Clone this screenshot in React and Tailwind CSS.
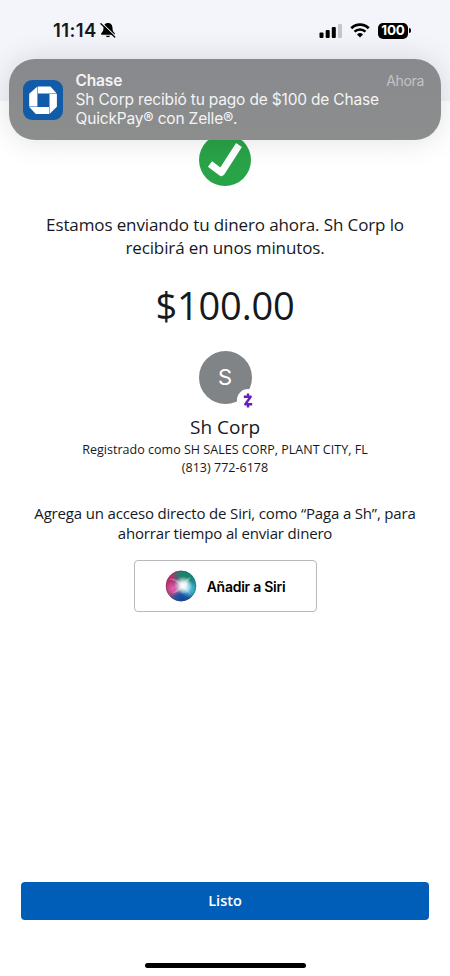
import React from "react";

// --- Status bar icons ---
function BellOff() {
  return (
    <svg width="18" height="17" viewBox="0 0 18 17" className="ml-[2px]">
      <path d="M9 1C5.900 1 4.600 3.200 4.500 6c-.1 3-.9 4-2.200 5.300-.6.6-.2 1.500.6 1.500h12.200c.8 0 1.200-.9.6-1.500C14.400 10 13.600 9 13.500 6 13.400 3.200 12.100 1 9 1Z" fill="#000" />
      <path d="M6.700 13.800a2.400 2 0 0 0 4.600 0Z" fill="#000" />
      <path d="M2.900 1.100 16.700 14.300" stroke="#f4f5fa" strokeWidth="1.100" />
      <path d="M1.900 1.800 15.700 15" stroke="#000" strokeWidth="1.300" strokeLinecap="round" />
    </svg>
  );
}

function Signal() {
  return (
    <svg width="24" height="16" viewBox="0 0 24 16">
      <rect x="0.500" y="9.500" width="4" height="5.500" rx="1" />
      <rect x="6.700" y="7" width="4" height="8" rx="1" />
      <rect x="12.800" y="4" width="4" height="11" rx="1" />
      <rect x="19" y="1" width="4" height="14" rx="1" fill="#c5c6cb" />
    </svg>
  );
}

function Wifi() {
  return (
    <svg width="20" height="15" viewBox="0 0 20 15" fill="none" stroke="#000">
      <path d="M1.300 5.200a12.500 12.500 0 0 1 17.400 0" strokeWidth="2.700" />
      <path d="M4.500 8.600a8 8 0 0 1 11 0" strokeWidth="2.500" />
      <path d="M10 14.600 7 11.500a4.400 4.400 0 0 1 6 0Z" fill="#000" stroke="none" />
    </svg>
  );
}

function StatusBar() {
  return (
    <header className="flex h-[101px] items-start justify-between bg-[#f4f5fa] pt-[22px] pr-[39px] pl-[53px]">
      <div className="flex h-[17px] items-center">
        <span className="font-[Inter,sans-serif] text-[18.500px] leading-none font-semibold tracking-[0.400px]">11:14</span>
        <BellOff />
      </div>
      <div className="flex h-[17px] items-center">
        <Signal />
        <div className="ml-[7px]"><Wifi /></div>
        <div className="ml-[8px] flex h-4 w-[30px] items-center justify-center rounded-[5px] bg-black font-[Inter,sans-serif] text-[13.500px] leading-none font-bold tracking-[-0.200px] text-white">
          100
        </div>
        <div className="ml-px h-[5px] w-[2px] rounded-r-full bg-black"></div>
      </div>
    </header>
  );
}

// --- Push notification over the page ---
function Notification() {
  return (
    <div className="absolute top-[59px] left-[9px] z-10 flex h-[81px] w-[432px] items-center rounded-[26px] bg-linear-to-b from-[#88898d] to-[#8c8e8d] pl-[14px] font-[Inter,sans-serif] text-white shadow-[0_0_30px_rgba(0,0,0,0.13)]">
      <svg width="40" height="40" viewBox="0 0 40 40" className="shrink-0">
        <rect width="40" height="40" rx="9" fill="#115ba9" />
        <g fill="#fff">
          <path d="M14.900 6.500H27.500L33.700 13.400H14.900Z" />
          <path d="M33.900 13.900V26.700L26.500 33.900V13.900Z" />
          <path d="M26 34H12.800L6.300 27.100H26Z" />
          <path d="M6.200 26.600V13.700L14.400 6.600V26.600Z" />
        </g>
      </svg>
      <div className="ml-[12.500px] flex-1 text-[15.500px] leading-[19px] text-[#f4f4f5]">
        <div className="flex justify-between pr-[17px]">
          <span className="font-semibold tracking-[-0.150px]">Chase</span>
          <span className="text-[14px] tracking-[-0.350px] text-[#c3c4c6]">Ahora</span>
        </div>
        <p className="tracking-[-0.180px] whitespace-nowrap">Sh Corp recibió tu pago de $100 de Chase</p>
        <p className="tracking-[-0.180px] whitespace-nowrap">QuickPay® con Zelle®.</p>
      </div>
    </div>
  );
}

function SiriOrb() {
  return (
    <svg width="32" height="32" viewBox="0 0 32 32">
      <defs>
        <linearGradient id="rim" x1="0" y1="0.300" x2="1" y2="0.700">
          <stop offset="0" stopColor="#cc2560" />
          <stop offset="0.350" stopColor="#8f4680" />
          <stop offset="0.650" stopColor="#2c7f94" />
          <stop offset="1" stopColor="#14a3ad" />
        </linearGradient>
        <radialGradient id="green" cx="0.650" cy="0.080" r="0.450">
          <stop offset="0" stopColor="#12886a" />
          <stop offset="0.500" stopColor="#12886a" stopOpacity="0.800" />
          <stop offset="1" stopColor="#12886a" stopOpacity="0" />
        </radialGradient>
        <radialGradient id="blue" cx="0.550" cy="1" r="0.450">
          <stop offset="0" stopColor="#153f92" />
          <stop offset="0.500" stopColor="#1c4fa5" stopOpacity="0.900" />
          <stop offset="1" stopColor="#1c4fa5" stopOpacity="0" />
        </radialGradient>
        <radialGradient id="pink" cx="0.240" cy="0.580" r="0.260">
          <stop offset="0" stopColor="#ee5fae" />
          <stop offset="1" stopColor="#ee5fae" stopOpacity="0" />
        </radialGradient>
        <radialGradient id="cyan" cx="0.740" cy="0.600" r="0.280">
          <stop offset="0" stopColor="#5fcbee" />
          <stop offset="1" stopColor="#5fcbee" stopOpacity="0" />
        </radialGradient>
        <radialGradient id="core" cx="0.570" cy="0.480" r="0.300">
          <stop offset="0" stopColor="#fff" />
          <stop offset="0.350" stopColor="#fff" stopOpacity="0.850" />
          <stop offset="1" stopColor="#fff" stopOpacity="0" />
        </radialGradient>
      </defs>
      <circle cx="16" cy="16" r="15.200" fill="url(#rim)" />
      <circle cx="16" cy="16" r="15.200" fill="url(#green)" />
      <circle cx="16" cy="16" r="15.200" fill="url(#blue)" />
      <circle cx="16" cy="16" r="15.200" fill="url(#pink)" />
      <circle cx="16" cy="16" r="15.200" fill="url(#cyan)" />
      <path d="M4 9C10 8 14 11 18 15 20 10 22 8 26 7 23 11 22 14 20 17L27 26 18 18C14 21 11 23 7 23 11 20 14 18 16 16 12 12 9 10 4 9Z" fill="#fff" opacity="0.300" />
      <circle cx="16" cy="16" r="15.200" fill="url(#core)" />
      <circle cx="16" cy="16" r="14.800" fill="none" stroke="#38455c" strokeOpacity="0.300" />
    </svg>
  );
}

export default function App() {
  return (
    <div className="relative flex h-[976px] w-[450px] flex-col overflow-hidden bg-white font-['Open_Sans',sans-serif] text-[#15191e]">
      <StatusBar />
      <Notification />

      <main className="flex flex-1 flex-col items-center pt-[33px] text-center whitespace-nowrap">
        <svg width="52" height="52" viewBox="0 0 52 52">
          <circle cx="26" cy="26" r="26" fill="#29a348" />
          <path d="M11 30 22.300 38.500 40 11" fill="none" stroke="#fff" strokeWidth="7" strokeLinejoin="round" />
        </svg>

        <p className="mt-[27px] text-[17px] leading-[23px] tracking-[-0.120px]">
          Estamos enviando tu dinero ahora. Sh Corp lo
          <br />
          recibirá en unos minutos.
        </p>
        <h1 className="mt-[20px] text-[38px] leading-[52px] tracking-[-0.200px]">$100.00</h1>

        <div className="relative mt-[20px] flex size-[53px] items-center justify-center rounded-full bg-[#808487] font-[Inter,sans-serif] text-[22px] text-white">
          S
          <div className="absolute top-[38px] left-[38px] flex size-[22px] items-center justify-center rounded-full bg-white">
            <svg width="10" height="15" viewBox="0 0 10 15" fill="none" stroke="#6420bd" strokeWidth="2.400">
              <path d="M5 0.500V3.500M5 11.500V14.500" />
              <path d="M0.800 3.700H7.700L2.300 11.300H9.200" strokeLinejoin="round" />
            </svg>
          </div>
        </div>

        <h2 className="mt-[10px] text-[19px] leading-[26px] tracking-[0.050px]">Sh Corp</h2>
        <p className="mt-px text-[12.500px] leading-[18px] tracking-[0.020px]">
          Registrado como SH SALES CORP, PLANT CITY, FL
          <br />
          (813) 772-6178
        </p>

        <p className="mt-[26px] text-[15px] leading-[20px] tracking-[-0.170px]">
          Agrega un acceso directo de Siri, como “Paga a Sh”, para
          <br />
          ahorrar tiempo al enviar dinero
        </p>

        <button className="mt-[17px] flex h-[52px] w-[183px] items-center justify-center gap-[10px] rounded-[4px] border border-[#b9b9bb] bg-white font-[Inter,sans-serif] text-[14px] font-semibold tracking-[-0.250px] text-black">
          <SiriOrb />
          Añadir a Siri
        </button>
      </main>

      <footer className="flex flex-col items-center px-[21px] pb-[8px]">
        <button className="h-[38px] w-full rounded-[4px] bg-[#005eb8] text-[14.500px] leading-none font-semibold text-white">Listo</button>
        <div className="mt-[43px] h-[5px] w-[161px] rounded-full bg-black"></div>
      </footer>
    </div>
  );
}
